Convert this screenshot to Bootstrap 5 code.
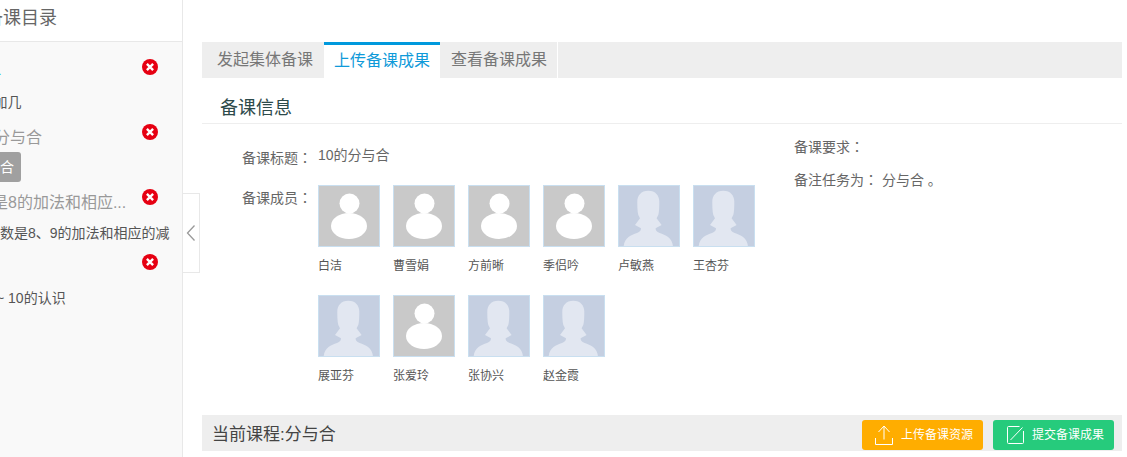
<!DOCTYPE html>
<html lang="zh">
<head>
<meta charset="utf-8">
<title>备课</title>
<link href="https://cdn.jsdelivr.net/npm/bootstrap@5.3.0/dist/css/bootstrap.min.css" rel="stylesheet">
<style>
html,body{height:457px;overflow:hidden;background:#fff}
body{font-family:"Liberation Sans","Noto Sans CJK SC",sans-serif;color:#666;font-size:14px;width:1127px}
.shell{height:457px}
.side{width:183px;flex:none;border-right:1px solid #e8e8e8;overflow:hidden;background:#f9f9f9;height:457px}
.side-head{height:42px;background:#fff;border-bottom:1px solid #e8e8e8;font-size:18px;line-height:37px;white-space:nowrap;color:#666}
.side-head span{display:block;margin-left:-51px}
.sline{white-space:nowrap;position:relative;height:0}
.sline>span{position:absolute;white-space:nowrap;left:0}
.x-mark{position:absolute;left:142px;width:16px;height:16px}
.t16{font-size:16px;color:#999;line-height:22px}
.t14{font-size:14px;color:#555;line-height:20px}
.chip{background:#a0a0a0;color:#fff;width:21px;height:30px;border-radius:0 3px 3px 0;font-size:14px;line-height:30px;overflow:hidden;text-align:right;padding-right:11px}
.toggle{position:absolute;left:183px;top:193px;width:17px;height:80px;border:1px solid #e8e8e8;border-left:0;background:#fff;display:flex;align-items:center;justify-content:center}
.main-pane{width:920px;margin-left:19px;flex:none;padding-top:42px;height:457px}
.tabbar{background:#eee;height:36px;flex-wrap:nowrap}
.tab-item{width:116px;height:36px;font-size:16px;line-height:36px;color:#777;text-align:center;margin-right:1px;padding:0;background:#eee;border-right:1px solid #fff}
.tab-item:first-child{width:122px;padding-left:4px;border-right:0;margin-right:0}
.tab-item:last-child{width:117px;margin-right:0}
.tab-item.on{background:#fff;color:#0f9ad9;border-top:3px solid #0099dd;line-height:32px;border-right:0}
.sec-title{height:46px;border-bottom:1px solid #eee;font-size:18px;color:#2d4a4a;padding-left:18px;line-height:60px;margin-bottom:0;font-weight:400}
.info{height:291px;position:relative}
.lbl-wrap{padding-left:40px;width:116px;flex:none;text-align:left;white-space:nowrap}
.lbl-low{padding-top:2px}
.title-row{padding-top:22px;height:61px;line-height:22px}
.val{margin-top:-2px}
.colon{font-family:"Noto Sans CJK TC",sans-serif}
.people{width:456px;display:flex;flex-wrap:wrap;column-gap:13px}
.person{width:62px;height:110px;font-size:12px;color:#555;white-space:nowrap}
.ava{width:62px;height:62px;display:block;border:1px solid #c9dff0;margin-bottom:10px}
.info-r{position:absolute;left:592px;top:11px;line-height:22px}
.info-r p{margin:0 0 10px;white-space:nowrap}
.cur{background:#eee;height:36px;padding:4px 8px 0 10px;font-size:17px;color:#444}
.act{width:121px;height:30px;padding:0;border:0;border-radius:3px;font-size:12px;color:#fff;gap:8px;display:flex;align-items:center}
.act-up,.act-up:hover{background:#ffad00;color:#fff;padding-left:13px}
.act-go,.act-go:hover{background:#26cb7c;color:#fff;padding-left:14px}
.act-row{column-gap:10px}
</style>
</head>
<body>
<svg width="0" height="0" class="position-absolute">
<defs>
<symbol id="male" viewBox="0 0 60 60"><rect width="60" height="60" fill="#c9c9c9"/><circle cx="30.500" cy="17.500" r="10" fill="#fff"/><ellipse cx="30" cy="40" rx="18" ry="13" fill="#fff"/></symbol>
<symbol id="female" viewBox="0 0 60 60"><rect width="60" height="60" fill="#c5cfe1"/><path fill="#e2e7f1" d="M29.300 4.700C22 4.700 18.300 9.500 18.300 15.700C18.300 21 18.500 26 19.300 29L21 32.300L16 39L22 42.300C22 44.500 21 45.700 18 47C15 48.300 12 48.800 9.500 51C7 53 5 56 4.700 60H53.900C53.600 56 51.600 53 49.100 51C46.600 48.800 43.600 48.300 40.600 47C37.600 45.700 36.600 44.500 36.600 42.300L42.600 39L37.600 32.300L39.300 29C40.100 26 40.300 21 40.300 15.700C40.300 9.500 36.600 4.700 29.300 4.700Z"/></symbol>
</defs>
</svg>
<div class="shell d-flex position-relative">
  <aside class="side">
    <div class="side-head"><span>集体备课目录</span></div>
    <div class="sline"><svg class="x-mark" style="top:17px" viewBox="0 0 16 16"><circle cx="8" cy="8" r="8" fill="#e60012"/><path d="M4.900 4.900l6.200 6.200M11.100 4.900l-6.200 6.200" stroke="#fff" stroke-width="2.400"/></svg></div>
    <div class="sline"><span class="t16" style="top:17px;left:-8px;color:#19c2c2">L</span></div>
    <div class="sline"><span class="t14" style="top:50px;left:-50px">10以内加几</span></div>
    <div class="sline"><svg class="x-mark" style="top:82px" viewBox="0 0 16 16"><circle cx="8" cy="8" r="8" fill="#e60012"/><path d="M4.900 4.900l6.200 6.200M11.100 4.900l-6.200 6.200" stroke="#fff" stroke-width="2.400"/></svg></div>
    <div class="sline"><span class="t16" style="top:85px;left:-6px">分与合</span></div>
    <div class="sline"><div class="chip position-absolute" style="top:110px;left:0">合</div></div>
    <div class="sline"><svg class="x-mark" style="top:147px" viewBox="0 0 16 16"><circle cx="8" cy="8" r="8" fill="#e60012"/><path d="M4.900 4.900l6.200 6.200M11.100 4.900l-6.200 6.200" stroke="#fff" stroke-width="2.400"/></svg></div>
    <div class="sline"><span class="t16" style="top:150px;left:-8px">是8的加法和相应...</span></div>
    <div class="sline"><span class="t14" style="top:181px;left:0">数是8、9的加法和相应的减</span></div>
    <div class="sline"><svg class="x-mark" style="top:212px" viewBox="0 0 16 16"><circle cx="8" cy="8" r="8" fill="#e60012"/><path d="M4.900 4.900l6.200 6.200M11.100 4.900l-6.200 6.200" stroke="#fff" stroke-width="2.400"/></svg></div>
    <div class="sline"><span class="t14" style="top:246px;left:-4px">~ 10的认识</span></div>
  </aside>
  <div class="toggle"><svg width="10" height="18" viewBox="0 0 10 18"><path d="M8.500 1.500L1.500 9l7 7.500" fill="none" stroke="#999" stroke-width="1.300"/></svg></div>
  <main class="main-pane">
    <nav class="nav tabbar">
      <a class="nav-link tab-item" href="#">发起集体备课</a>
      <a class="nav-link tab-item on" href="#">上传备课成果</a>
      <a class="nav-link tab-item" href="#">查看备课成果</a>
    </nav>
    <h2 class="sec-title">备课信息</h2>
    <div class="info">
      <div class="d-flex title-row"><div class="lbl-wrap">备课标题<span class="colon" lang="zh-Hant">：</span></div><div class="val">10的分与合</div></div>
      <div class="d-flex">
        <div class="lbl-wrap lbl-low">备课成员<span class="colon" lang="zh-Hant">：</span></div>
        <div class="people">
          <div class="person"><svg class="ava"><use href="#male"/></svg>白洁</div>
          <div class="person"><svg class="ava"><use href="#male"/></svg>曹雪娟</div>
          <div class="person"><svg class="ava"><use href="#male"/></svg>方前晰</div>
          <div class="person"><svg class="ava"><use href="#male"/></svg>季侣吟</div>
          <div class="person"><svg class="ava"><use href="#female"/></svg>卢敏燕</div>
          <div class="person"><svg class="ava"><use href="#female"/></svg>王杏芬</div>
          <div class="person"><svg class="ava"><use href="#female"/></svg>展亚芬</div>
          <div class="person"><svg class="ava"><use href="#male"/></svg>张爱玲</div>
          <div class="person"><svg class="ava"><use href="#female"/></svg>张协兴</div>
          <div class="person"><svg class="ava"><use href="#female"/></svg>赵金霞</div>
        </div>
      </div>
      <div class="info-r"><p>备课要求<span class="colon" lang="zh-Hant">：</span></p><p>备注任务为<span class="colon" lang="zh-Hant">：</span> 分与合 。</p></div>
    </div>
    <div class="cur d-flex align-items-center justify-content-between">
      <span>当前课程:分与合</span>
      <div class="d-flex act-row">
        <button class="btn act act-up" type="button"><svg width="18" height="20" viewBox="0 0 18 20"><path d="M9 14.500V1.500M3.500 7L9 1l5.500 6M.5 13v6.500h17V13" fill="none" stroke="#fff"/></svg>上传备课资源</button>
        <button class="btn act act-go" type="button"><svg width="17" height="18" viewBox="0 0 17 18"><path d="M16.500 5v11.500q0 1-1 1H1.500q-1 0-1-1V1.500q0-1 1-1h11M3.500 14L15.500 1.500" fill="none" stroke="#fff"/></svg>提交备课成果</button>
      </div>
    </div>
  </main>
</div>
</body>
</html>
